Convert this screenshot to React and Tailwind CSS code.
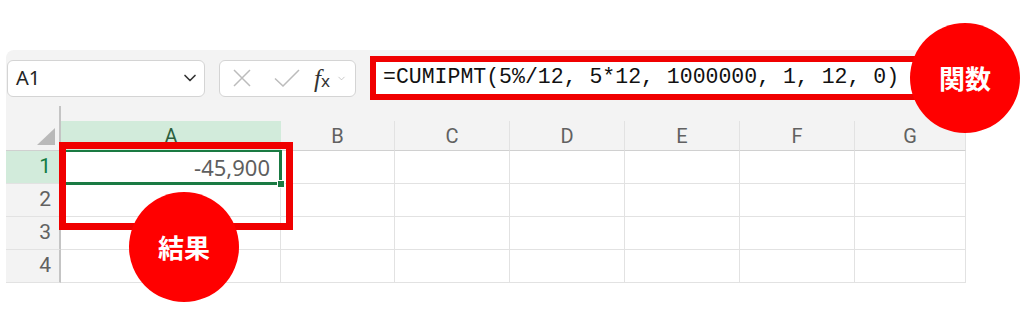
import React from 'react';
import { ChevronDown } from 'lucide-react';

const cols = ['A', 'B', 'C', 'D', 'E', 'F', 'G'];
const rows = [1, 2, 3, 4];

export default function App() {
  return (
    <div className="relative w-[1024px] h-[335px] overflow-hidden bg-white pt-[50px] pl-[6px] font-['Noto_Sans',sans-serif]">
      {/* Excel panel */}
      <div className="w-[960px] bg-[#f3f3f3] rounded-tl-lg">
        {/* Toolbar: name box, fx box, formula bar */}
        <div className="flex items-center h-[56px] pl-[1px]">
          <div className="flex items-center justify-between w-[198px] h-[37px] bg-white border border-[#d4d4d4] rounded-md pl-[8px] pr-[4px]">
            <span className="text-[20px] text-[#242424] leading-none">A1</span>
            <ChevronDown size={20} strokeWidth={2} className="text-[#333]" />
          </div>
          <div className="flex items-center w-[137px] h-[37px] ml-[14px] bg-white border border-[#d4d4d4] rounded-md pl-[12px]">
            {/* cancel */}
            <svg width="20" height="20" viewBox="0 0 20 20" className="shrink-0">
              <path d="M2 2 L18 18 M18 2 L2 18" stroke="#bcbcbc" strokeWidth="1.5" fill="none" />
            </svg>
            {/* enter */}
            <svg width="26" height="18" viewBox="0 0 26 18" className="shrink-0 ml-[22px]">
              <path d="M1 9.5 L9 17 L25 1" stroke="#bcbcbc" strokeWidth="1.5" fill="none" />
            </svg>
            <span className="ml-[14px] text-[#333] font-['Liberation_Serif',serif] italic text-[25px] leading-none">
              f<span className="not-italic font-['Noto_Sans',sans-serif] text-[17px]">x</span>
            </span>
            <ChevronDown size={11} strokeWidth={1.5} className="text-[#b0b0b0] ml-[6px] shrink-0" />
          </div>
          {/* Formula bar with red highlight */}
          <div className="flex items-center w-[560px] h-[44px] ml-[14px] bg-white border-[6px] border-[#f00000] pl-[7px]">
            <span className="text-[21.5px] text-[#111] font-['Liberation_Mono',monospace] whitespace-pre leading-none">
              =CUMIPMT(5%/12, 5*12, 1000000, 1, 12, 0)
            </span>
          </div>
        </div>

        {/* Corner splitter stub */}
        <div className="w-[55px] h-[15px] border-r-2 border-[#c4c4c4]" />

        {/* Grid */}
        <div className="grid grid-cols-[55px_220px_114px_115px_115px_115px_115px_111px] font-['Roboto',sans-serif]">
          {/* Header row */}
          <div className="relative h-[30px] border-r-2 border-b border-[#c4c4c4] border-b-[#d0d0d0]">
            <div className="absolute right-[4px] bottom-[5px] w-0 h-0 border-l-[18px] border-l-transparent border-b-[17px] border-b-[#b9b9b9]" />
          </div>
          {cols.map((c) => (
            <div
              key={c}
              className={`flex items-center justify-center h-[30px] border-b border-[#d0d0d0] text-[20px] ${
                c === 'A' ? 'bg-[#d2ebdb] text-[#2c5f3e]' : 'border-r border-r-[#e2e2e2] text-[#616161]'
              }`}
            >
              {c}
            </div>
          ))}

          {/* Rows */}
          {rows.map((r) => (
            <React.Fragment key={r}>
              <div
                className={`flex items-center justify-end pr-[8px] h-[33px] border-r-2 border-[#c4c4c4] border-b border-b-[#e2e2e2] text-[21px] ${
                  r === 1 ? 'bg-[#d2ebdb] text-[#107c41]' : 'text-[#616161]'
                }`}
              >
                {r}
              </div>
              {cols.map((c) => (
                <div
                  key={c}
                  className="relative flex items-center justify-end h-[33px] bg-white border-r border-b border-[#e2e2e2] pr-[10px]"
                >
                  {r === 1 && c === 'A' && (
                    <>
                      <span className="text-[22px] text-[#5f5f5f] font-['Noto_Sans',sans-serif]">-45,900</span>
                      <div className="absolute z-10 -left-[1px] -top-[1px] -right-[2px] -bottom-[2px] border-2 border-b-[3px] border-r-[3px] border-[#1a7a43]" />
                      <div className="absolute z-10 -right-[5px] -bottom-[5px] w-[8px] h-[8px] bg-[#1a7a43] border border-white" />
                    </>
                  )}
                </div>
              ))}
            </React.Fragment>
          ))}
        </div>
      </div>

      {/* Red highlight around A1:A2 */}
      <div className="absolute z-20 left-[59px] top-[142px] w-[234px] h-[88px] border-[7px] border-[#f00000]" />

      {/* Callout circles */}
      <div className="absolute z-20 left-[910px] top-[23px] w-[110px] h-[110px] rounded-full bg-[#ff0000] flex items-center justify-center">
        <span className="text-white font-bold text-[26px] font-['Noto_Sans_CJK_JP',sans-serif] leading-none">関数</span>
      </div>
      <div className="absolute z-20 left-[129px] top-[192px] w-[110px] h-[110px] rounded-full bg-[#ff0000] flex items-center justify-center">
        <span className="text-white font-bold text-[26px] font-['Noto_Sans_CJK_JP',sans-serif] leading-none">結果</span>
      </div>
    </div>
  );
}
